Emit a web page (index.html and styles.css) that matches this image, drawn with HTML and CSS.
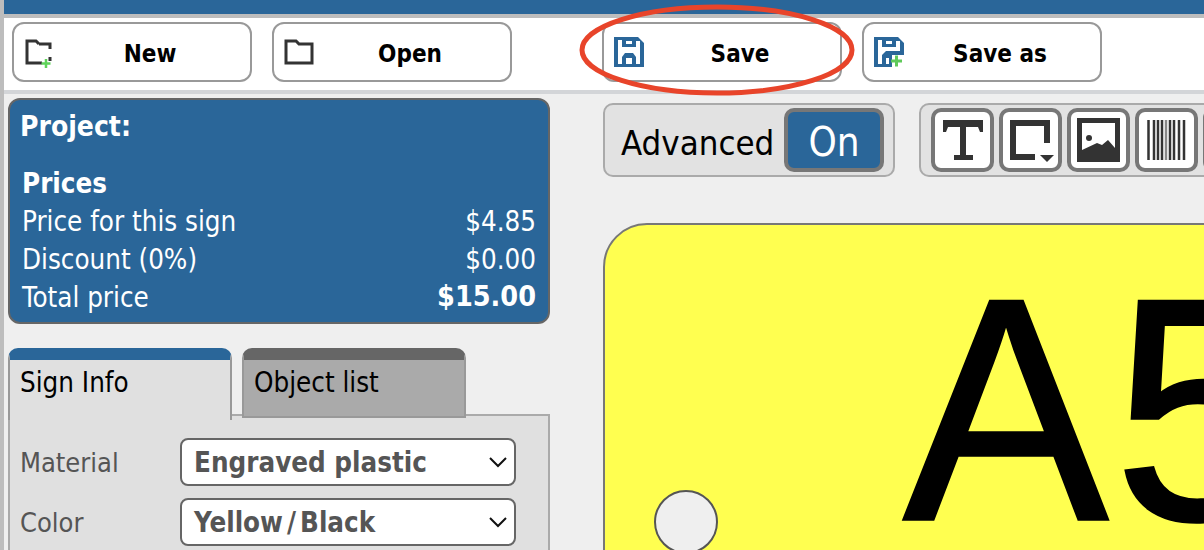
FILE: index.html
```html
<!DOCTYPE html>
<html lang="en">

<head>
    <meta charset="UTF-8">
    <meta name="viewport" content="width=device-width, initial-scale=1.0">
    <title>Sign editor</title>
    <link rel="stylesheet" href="styles.css">
</head>

<body>
    <div class="app">
        <div class="topbar"></div>
        <div class="toolbar">
            <button class="tool-btn">
                <svg class="tool-icon" viewBox="0 0 32 32"><path d="M15 7H26V12M26 20V24M18 26H3V4H12L15 7" fill="none" stroke="#333" stroke-width="3"/><path d="M22 22V31M17.500 26.500H26.500" stroke="#5fd35a" stroke-width="2.500"/></svg>
                <span>New</span>
            </button>
            <button class="tool-btn">
                <svg class="tool-icon" viewBox="0 0 32 32"><path d="M2 4H12L15 7H28V26H2Z" fill="none" stroke="#333" stroke-width="3"/></svg>
                <span>Open</span>
            </button>
            <button class="tool-btn save-btn">
                <svg class="tool-icon" viewBox="0 0 32 32"><path fill="#2a6699" fill-rule="evenodd" d="M0 0H24L30 6V30H0ZM12 4H18V7H12ZM4 3H8V10H22V4H26V27H22V20L19 16H11L8 20V27H4ZM12 21H18V27H12Z"/></svg>
                <span>Save</span>
            </button>
            <button class="tool-btn">
                <svg class="tool-icon" viewBox="0 0 32 32"><path fill="#2a6699" fill-rule="evenodd" d="M0 0H24L30 6V18H18V30H0ZM12 4H18V7H12ZM4 3H8V10H22V4H26V14H12L8 18V27H4ZM12 21H15V27H12Z"/><path d="M22.500 18.500V29.500M17 24H28" stroke="#5fc95a" stroke-width="3"/></svg>
                <span>Save as</span>
            </button>
        </div>

        <div class="main">
            <div class="sidebar">
                <div class="project">
                    <div class="project-title">Project:</div>
                    <div class="prices-title">Prices</div>
                    <div class="price-row"><span>Price for this sign</span><span>$4.85</span></div>
                    <div class="price-row"><span>Discount (0%)</span><span>$0.00</span></div>
                    <div class="price-row"><span>Total price</span><strong>$15.00</strong></div>
                </div>

                <div class="tabs">
                    <div class="tab tab-active">Sign Info</div>
                    <div class="tab">Object list</div>
                </div>
                <div class="tab-panel">
                    <div class="field">
                        <span class="field-label">Material</span>
                        <div class="select">Engraved plastic
                            <svg class="chevron" viewBox="0 0 18 11"><path d="M1 1L9 9L17 1" fill="none" stroke="#111" stroke-width="2"/></svg>
                        </div>
                    </div>
                    <div class="field">
                        <span class="field-label">Color</span>
                        <div class="select"><span>Yellow<span class="slash">/</span>Black</span>
                            <svg class="chevron" viewBox="0 0 18 11"><path d="M1 1L9 9L17 1" fill="none" stroke="#111" stroke-width="2"/></svg>
                        </div>
                    </div>
                </div>
            </div>

            <div class="workspace">
                <div class="controls">
                    <div class="group advanced">
                        <span>Advanced</span>
                        <div class="toggle">On</div>
                    </div>
                    <div class="group insert-tools">
                        <div class="icon-btn">
                            <svg viewBox="0 0 55 56"><path fill="#333" d="M8 8H48V20H45L43 15H31V43H38V48H19V43H25V15H13L11 20H8Z"/></svg>
                        </div>
                        <div class="icon-btn">
                            <svg viewBox="0 0 55 56"><path d="M44 31V11H10V45H32" fill="none" stroke="#333" stroke-width="6"/><path d="M37 43H51L44 50Z" fill="#333"/></svg>
                        </div>
                        <div class="icon-btn">
                            <svg viewBox="0 0 55 56"><path fill="#333" fill-rule="evenodd" d="M6 6H49V50H6ZM11 11V38L26 31L31 33L37 28L44 36V11Z"/><circle cx="18" cy="26" r="3" fill="#333"/></svg>
                        </div>
                        <div class="icon-btn">
                            <svg viewBox="0 0 55 56"><path d="M9.500 8V48M15 8V48M19 8V48M23 8V48M31 8V48M35 8V48M40 8V48M45 8V48" fill="none" stroke="#333" stroke-width="2.500"/><path d="M27 8V48" stroke="#888" stroke-width="2.500"/></svg>
                        </div>
                        <div class="icon-btn"></div>
                    </div>
                </div>
                <div class="sign">
                    <div class="sign-hole"></div>
                    <div class="sign-text">A5</div>
                </div>
            </div>
        </div>

        <svg class="highlight" viewBox="0 0 280 94"><ellipse cx="140" cy="47" rx="135" ry="43" fill="none" stroke="#e8442a" stroke-width="5"/></svg>
    </div>
</body>

</html>
```

FILE: styles.css
```css
html, body {
    margin: 0;
    height: 100%;
    overflow: hidden;
}

body {
    background-color: #efefef;
    font-family: 'DejaVu Sans Condensed', 'DejaVu Sans', sans-serif;
    color: #000;
}

.app {
    position: relative;
    height: 550px;
    border-left: 4px solid #bdbdbd;
    box-sizing: border-box;
}

.topbar {
    height: 14px;
    background-color: #2a6699;
    border-bottom: 4px solid #bdbdbd;
}

.toolbar {
    display: flex;
    height: 68px;
    padding: 4px 0 0 8px;
    background-color: #fff;
    border-bottom: 4px solid #d3d5d8;
}

.tool-btn {
    position: relative;
    display: flex;
    align-items: center;
    justify-content: center;
    width: 240px;
    height: 60px;
    margin-right: 20px;
    padding: 4px 0 0 36px;
    background-color: #fff;
    border: 2px solid #999;
    border-radius: 12px;
    font-family: inherit;
    font-size: 24px;
    font-weight: bold;
}

.save-btn {
    margin-left: 70px;
}

.tool-icon {
    position: absolute;
    left: 10px;
    top: 13px;
    width: 32px;
    height: 32px;
}

.main {
    display: flex;
    padding-top: 4px;
}

.sidebar {
    width: 542px;
    margin-left: 4px;
}

.project {
    height: 226px;
    padding: 9px 12px;
    box-sizing: border-box;
    background-color: #2a6699;
    border: 2px solid #666;
    border-radius: 12px;
    color: #fff;
    font-size: 27.500px;
}

.project-title {
    font-weight: bold;
    font-size: 28px;
    height: 55px;
    line-height: 36px;
    margin-left: -2px;
}

.prices-title {
    font-weight: bold;
    line-height: 38px;
}

.price-row {
    display: flex;
    justify-content: space-between;
    line-height: 38px;
}

.price-row strong {
    font-size: 28.500px;
}

.tabs {
    display: flex;
    gap: 10px;
    margin-top: 24px;
    height: 66px;
}

.tab {
    position: relative;
    z-index: 1;
    width: 224px;
    height: 70px;
    padding: 2px 10px 0;
    box-sizing: border-box;
    background-color: #aaa;
    border: 2px solid #999;
    border-top: 12px solid #666;
    border-radius: 10px 10px 0 0;
    font-size: 27.500px;
    line-height: 40px;
}

.tab-active {
    background-color: #e0e0e0;
    border-top-color: #2a6699;
    border-bottom: 0;
    height: 72px;
}

.tab-panel {
    height: 140px;
    padding: 22px 32px 0 10px;
    background-color: #e0e0e0;
    border: 2px solid #aaa;
}

.field {
    display: flex;
    align-items: center;
    margin-bottom: 12px;
}

.field-label {
    width: 160px;
    color: #555;
    font-size: 27px;
}

.select {
    display: flex;
    align-items: center;
    justify-content: space-between;
    width: 336px;
    height: 48px;
    padding: 0 7px 0 12px;
    box-sizing: border-box;
    background-color: #fff;
    border: 2px solid #666;
    border-radius: 8px;
    color: #555;
    font-size: 27.500px;
    font-weight: bold;
}

.slash {
    margin: 0 4px;
}

.chevron {
    width: 18px;
    height: 11px;
}

.workspace {
    flex: 1;
    min-width: 0;
    padding-left: 53px;
    overflow: hidden;
}

.controls {
    display: flex;
    gap: 24px;
    margin-top: 5px;
}

.group {
    display: flex;
    align-items: center;
    flex: none;
    height: 74px;
    box-sizing: border-box;
    background-color: #e2e2e2;
    border: 2px solid #aaa;
    border-radius: 10px;
}

.advanced {
    width: 292px;
    padding: 6px 9px 0 16px;
    justify-content: space-between;
    font-size: 34.500px;
}

.toggle {
    display: flex;
    align-items: center;
    justify-content: center;
    width: 100px;
    height: 64px;
    margin-top: -6px;
    padding-top: 4px;
    box-sizing: border-box;
    background-color: #2a6699;
    border: 4px solid #777;
    border-radius: 10px;
    color: #fff;
    font-size: 40px;
}

.insert-tools {
    gap: 5px;
    padding-left: 10px;
    width: 320px;
}

.icon-btn {
    flex: none;
    width: 63px;
    height: 64px;
    box-sizing: border-box;
    background-color: #fff;
    border: 4px solid #777;
    border-radius: 10px;
}

.icon-btn svg {
    display: block;
    width: 100%;
    height: 100%;
}

.sign {
    position: relative;
    width: 900px;
    height: 600px;
    margin-top: 46px;
    background-color: #ffff50;
    border: 2px solid #777;
    border-radius: 44px;
}

.sign-hole {
    position: absolute;
    left: 49px;
    top: 265px;
    width: 64px;
    height: 64px;
    box-sizing: border-box;
    background-color: #efefef;
    border: 2px solid #555;
    border-radius: 50%;
}

.sign-text {
    position: absolute;
    left: 298px;
    top: 27px;
    font-family: 'Liberation Sans', Arial, sans-serif;
    font-size: 308px;
    line-height: 1;
    letter-spacing: 5px;
    -webkit-text-stroke: 2.500px #000;
    transform: scaleY(1.03);
    transform-origin: 0 48px;
}

.highlight {
    position: absolute;
    left: 573px;
    top: 3px;
    width: 280px;
    height: 94px;
}
```
